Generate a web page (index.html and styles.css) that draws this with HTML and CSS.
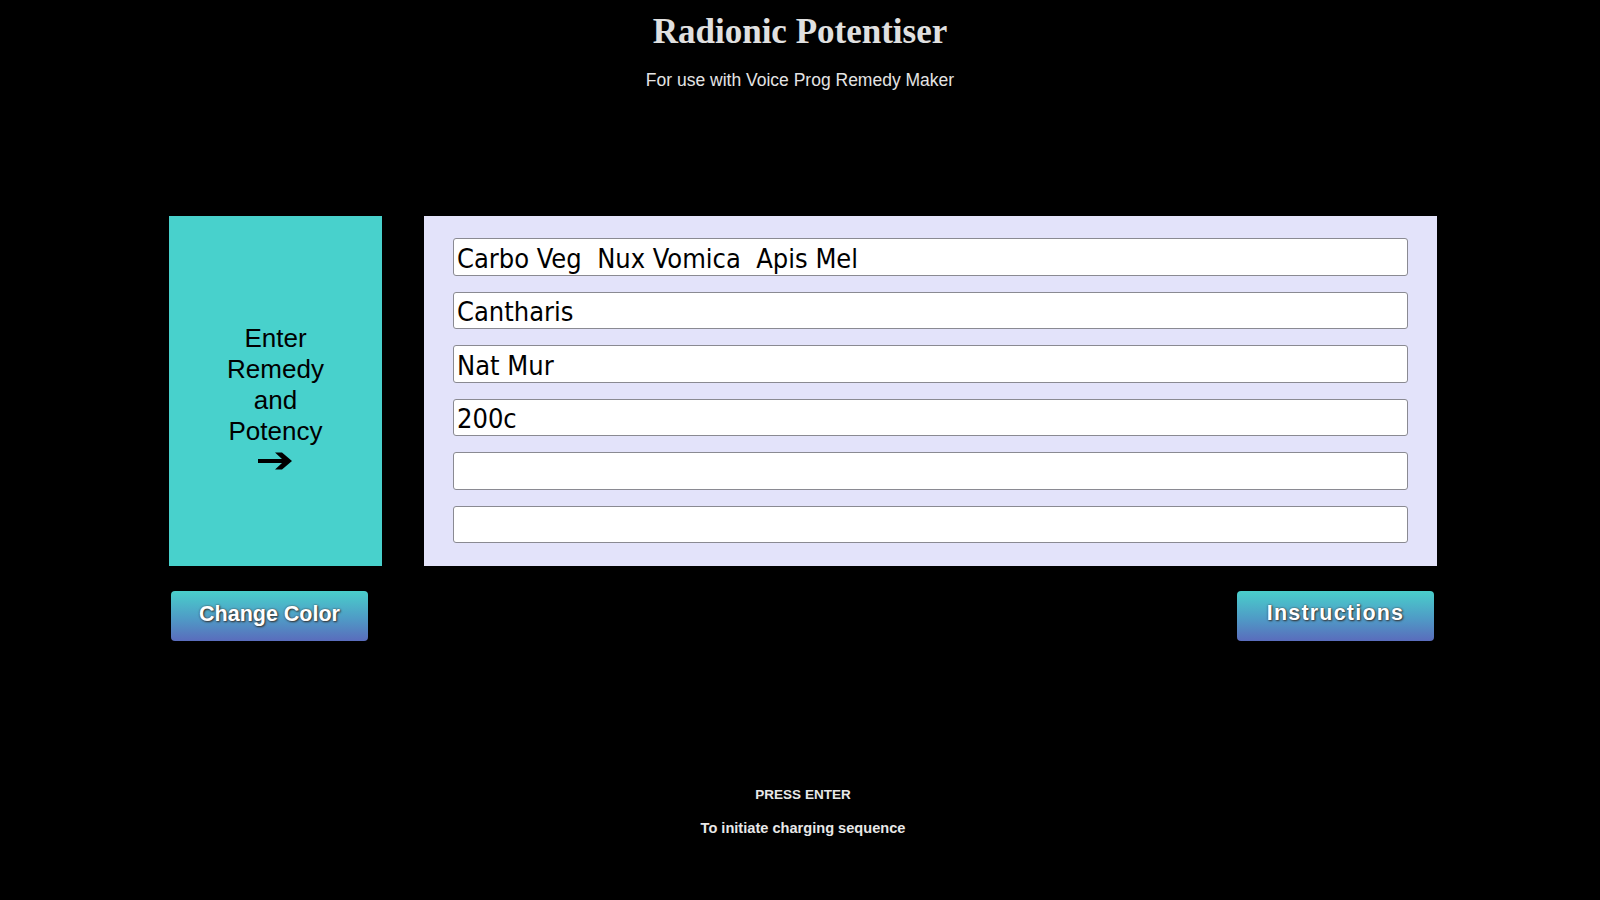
FILE: index.html
```html
<!DOCTYPE html>
<html lang="en">
<head>
<meta charset="utf-8">
<title>Radionic Potentiser</title>
<link rel="stylesheet" href="styles.css">
</head>
<body>
<header class="header">
  <h1 class="title">Radionic Potentiser</h1>
  <p class="subtitle">For use with Voice Prog Remedy Maker</p>
</header>
<main class="stage">
  <div class="row">
    <div class="prompt">
      <div class="prompt-text">Enter<br>Remedy<br>and<br>Potency</div>
      <svg class="arrow" viewBox="0 0 38 20" width="38" height="20" aria-hidden="true">
        <path d="M0 8 H24 L17 1.5 H24 L34 10 L24 18.5 H17 L24 12 H0 Z" fill="#000"/>
      </svg>
    </div>
    <div class="panel">
      <input class="field" type="text" value="Carbo Veg  Nux Vomica  Apis Mel">
      <input class="field" type="text" value="Cantharis">
      <input class="field" type="text" value="Nat Mur">
      <input class="field" type="text" value="200c">
      <input class="field" type="text" value="">
      <input class="field" type="text" value="">
    </div>
  </div>
  <div class="buttons">
    <button class="btn" type="button">Change Color</button>
    <button class="btn btn-wide" type="button">Instructions</button>
  </div>
</main>
<footer class="footer">
  <p class="press">PRESS ENTER</p>
  <p class="note">To initiate charging sequence</p>
</footer>
</body>
</html>
```

FILE: styles.css
```css
html, body {
  margin: 0;
  padding: 0;
  background: #000;
  height: 100%;
}

body {
  font-family: "Liberation Sans", Arial, sans-serif;
  color: #e0e0e0;
}

.header {
  text-align: center;
  padding-top: 12px;
}

.title {
  font-family: "Liberation Serif", "Times New Roman", serif;
  font-weight: bold;
  font-size: 35px;
  line-height: 40px;
  margin: 0;
  color: #e0e0e0;
}

.subtitle {
  font-size: 17.5px;
  margin: 18px 0 0 0;
  line-height: 20px;
  color: #e4e4e4;
}

.stage {
  width: 1268px;
  margin: 126px 0 0 169px;
}

.row {
  display: flex;
  gap: 42px;
  height: 350px;
}

.prompt {
  width: 213px;
  flex: none;
  background: #48d1cc;
  display: flex;
  flex-direction: column;
  align-items: center;
  justify-content: center;
  color: #000;
  padding-top: 11px;
  box-sizing: border-box;
}

.prompt-text {
  font-size: 26px;
  line-height: 31px;
  text-align: center;
}

.arrow {
  display: block;
  margin-top: 4px;
  margin-left: 3px;
}

.panel {
  flex: 1;
  background: #e3e3fa;
  padding: 22px 29px 0 29px;
  box-sizing: border-box;
  display: flex;
  flex-direction: column;
  gap: 16px;
}

.field {
  display: block;
  width: 100%;
  height: 37.5px;
  box-sizing: border-box;
  border: 1px solid #8a8a92;
  border-radius: 3px;
  background: #fff;
  font-family: "DejaVu Sans Condensed", "DejaVu Sans", sans-serif;
  font-size: 27px;
  padding: 3px 3px 0 3px;
  color: #000;
  outline: none;
}

.buttons {
  display: flex;
  justify-content: space-between;
  margin-top: 25px;
  padding: 0 3px 0 2px;
}

.btn {
  width: 197px;
  height: 50px;
  border: none;
  border-radius: 4px;
  background: linear-gradient(to bottom, #49cfcb 0%, #4f9bc6 55%, #5a6cbc 100%);
  color: #fff;
  font-family: "Liberation Sans", Arial, sans-serif;
  font-weight: bold;
  font-size: 21.5px;
  text-shadow: 1px 1px 2px #333, 0 0 2px #444;
  padding: 0 0 4px 0;
  cursor: pointer;
}

.btn-wide {
  letter-spacing: 1.2px;
  padding-bottom: 6px;
}

.footer {
  text-align: center;
  margin-top: 146px;
  padding-left: 6px;
}

.press,
.note {
  font-weight: bold;
  line-height: 16px;
  margin: 0;
  color: #e8e8e8;
}

.press {
  font-size: 13.5px;
}

.note {
  font-size: 14.6px;
  margin-top: 17px;
}
```
